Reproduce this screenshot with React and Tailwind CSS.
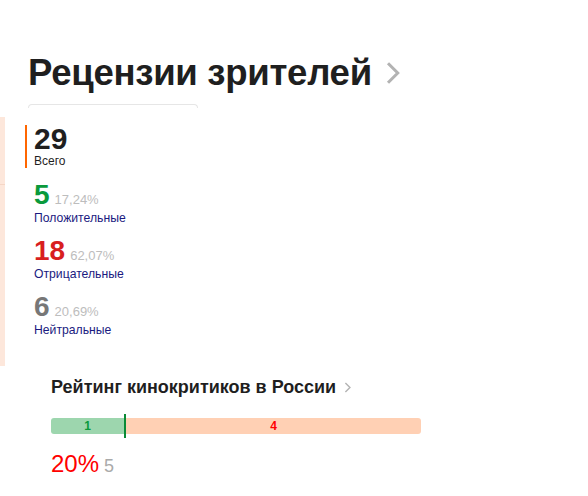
import React from 'react';

const stats = [
  { value: '5', pct: '17,24%', label: 'Положительные', color: 'text-[#0a9a3c]' },
  { value: '18', pct: '62,07%', label: 'Отрицательные', color: 'text-[#d81f1f]' },
  { value: '6', pct: '20,69%', label: 'Нейтральные', color: 'text-[#777777]' },
];

const Chevron = ({ className }) => (
  <svg viewBox="0 0 10 16" className={className} fill="none" stroke="currentColor" strokeWidth="2">
    <path d="M2 1.5 8.5 8 2 14.5" />
  </svg>
);

export default function App() {
  return (
    <div className="w-[588px] h-[496px] bg-white overflow-hidden font-['Liberation_Sans',Arial,sans-serif] text-[#1f1f1f]">
      <div className="pl-[28px] pt-[50px] flex items-center">
        <h1 className="text-[36.6px] leading-[46px] font-bold tracking-[-0.3px]">Рецензии зрителей</h1>
        <Chevron className="w-[15px] h-[26px] ml-[13px] text-[#b3b3b3]" />
      </div>
      <div className="ml-[28px] mt-[8px] w-[170px] h-[4px] border-t border-x border-[#e6e6e6] rounded-t-[6px]" />
      <div className="flex mt-[9px]">
        <div className="w-[5px] h-[249px] bg-[#fde7db] flex flex-col">
          <div className="h-[67px]" />
          <div className="h-px bg-[#f5d6c6]" />
        </div>
        <div className="ml-[20px] pt-[8px]">
          <div className="border-l-[2px] border-[#f60] pl-[7px] h-[43px] flex flex-col">
            <div className="text-[30px] leading-[28px] font-semibold">29</div>
            <div className="text-[12px] leading-[14px] mt-[1px]">Всего</div>
          </div>
          {stats.map((s) => (
            <div key={s.value} className="pl-[9px] mt-[13px] h-[43px] flex flex-col">
              <div className="flex items-baseline">
                <span className={`text-[28px] leading-[28px] font-semibold ${s.color}`}>{s.value}</span>
                <span className="ml-[5px] text-[13px] text-[#bdbdbd]">{s.pct}</span>
              </div>
              <div className="text-[12.2px] leading-[14px] mt-[1px] text-[#1a1a80]">{s.label}</div>
            </div>
          ))}
        </div>
      </div>
      <div className="pl-[51px] mt-[10px] flex items-center">
        <h2 className="text-[18px] leading-[22px] font-bold">Рейтинг кинокритиков в России</h2>
        <Chevron className="w-[7px] h-[13px] ml-[8px] text-[#b3b3b3]" />
      </div>
      <div className="ml-[51px] mt-[20px] w-[370px] h-[16px] flex relative">
        <div className="w-[73px] h-full bg-[#9dd6ae] rounded-l-[3px] flex items-center justify-center text-[12px] font-bold text-[#0a9a3c]">1</div>
        <div className="w-[2px] h-[24px] -mt-[4px] bg-[#0a8a36]" />
        <div className="flex-1 h-full bg-[#ffd0b4] rounded-r-[3px] flex items-center justify-center text-[12px] font-bold text-[#f00]">4</div>
      </div>
      <div className="pl-[51px] mt-[16px] flex items-baseline">
        <span className="text-[24px] leading-[28px] text-[#f00]">20%</span>
        <span className="ml-[5px] text-[18px] text-[#aaaaaa]">5</span>
      </div>
    </div>
  );
}
